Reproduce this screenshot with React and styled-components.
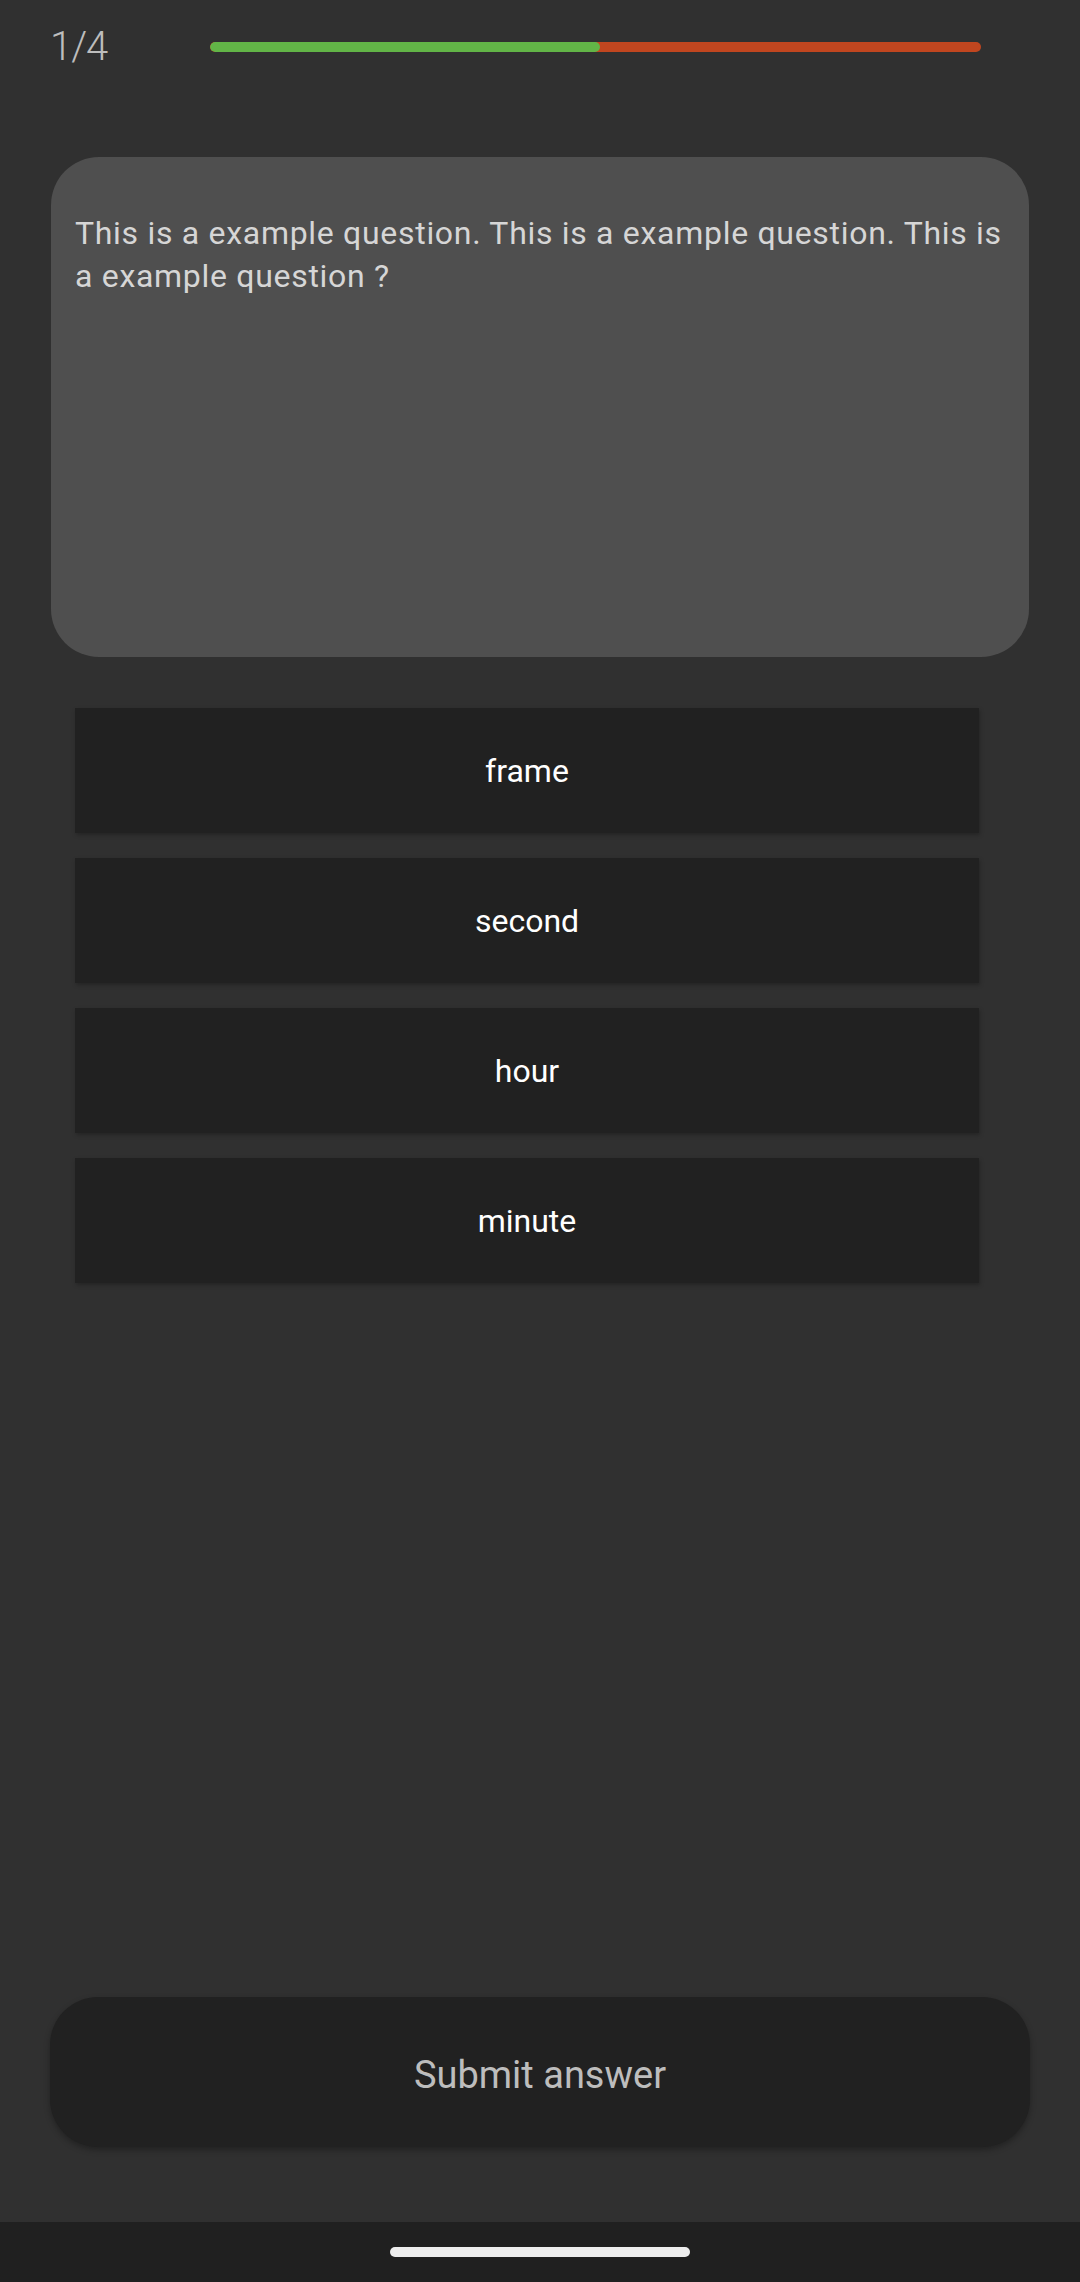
import styled, { createGlobalStyle } from "styled-components";

const GlobalStyle = createGlobalStyle`
  body {
    margin: 0;
    background: #303030;
    font-family: "Roboto", "Noto Sans", sans-serif;
  }
`;

const options = ["frame", "second", "hour", "minute"];
const answered = 1;
const total = 4;
const progress = 0.506; // part of the bar that is green

function App() {
  return (
    <>
      <GlobalStyle />
      <Page>
        <Header>
          <Counter>
            {answered}/{total}
          </Counter>
          <Track>
            <Fill style={{ width: `${progress * 100}%` }} />
          </Track>
        </Header>

        <Content>
          <QuestionCard>
            This is a example question. This is a example question. This is a
            example question ?
          </QuestionCard>

          <OptionList>
            {options.map((o) => (
              <OptionButton key={o}>{o}</OptionButton>
            ))}
          </OptionList>
        </Content>

        <Footer>
          <SubmitButton>Submit answer</SubmitButton>
        </Footer>

        <NavBar>
          <Handle />
        </NavBar>
      </Page>
    </>
  );
}

const Page = styled.div`
  display: flex;
  flex-direction: column;
  height: 2282px;
  width: 1080px;
  background: #303030;
`;

const Header = styled.div`
  display: flex;
  align-items: center;
  height: 94px;
  padding-left: 50px;
  box-sizing: border-box;
`;

const Counter = styled.div`
  width: 160px;
  color: #bdbdbd;
  font-size: 40px;
  font-weight: 300;
  line-height: 1;
  letter-spacing: -1px;
`;

const Track = styled.div`
  width: 771px;
  height: 10px;
  border-radius: 5px;
  background: #c1461f;
  overflow: hidden;
`;

const Fill = styled.div`
  height: 100%;
  background: #62b547;
  border-radius: 5px;
`;

const Content = styled.div`
  flex: 1;
  display: flex;
  flex-direction: column;
  padding: 63px 51px 0;
`;

const QuestionCard = styled.div`
  height: 500px;
  box-sizing: border-box;
  padding: 55px 24px 0;
  background: #4f4f4f;
  border-radius: 48px;
  color: #d6d6d6;
  font-size: 32px;
  line-height: 43px;
  letter-spacing: 0.7px;
`;

const OptionList = styled.div`
  display: flex;
  flex-direction: column;
  gap: 25px;
  margin-top: 51px;
  padding: 0 50px 0 24px;
`;

const OptionButton = styled.div`
  height: 125px;
  display: flex;
  align-items: center;
  justify-content: center;
  background: #212121;
  box-shadow: 1px 2px 4px rgba(0, 0, 0, 0.25);
  color: #ffffff;
  font-size: 32px;
`;

const Footer = styled.div`
  padding: 0 50px 75px;
`;

const SubmitButton = styled.div`
  height: 150px;
  box-sizing: border-box;
  padding-top: 5px;
  display: flex;
  align-items: center;
  justify-content: center;
  background: #212121;
  border-radius: 48px;
  box-shadow: 0 3px 6px rgba(0, 0, 0, 0.3);
  color: #bdbdbd;
  font-size: 38px;
`;

const NavBar = styled.div`
  height: 60px;
  background: #202020;
  display: flex;
  justify-content: center;
  padding-top: 25px;
  box-sizing: border-box;
`;

const Handle = styled.div`
  width: 300px;
  height: 10px;
  border-radius: 5px;
  background: #eeeeee;
`;

export default App;
